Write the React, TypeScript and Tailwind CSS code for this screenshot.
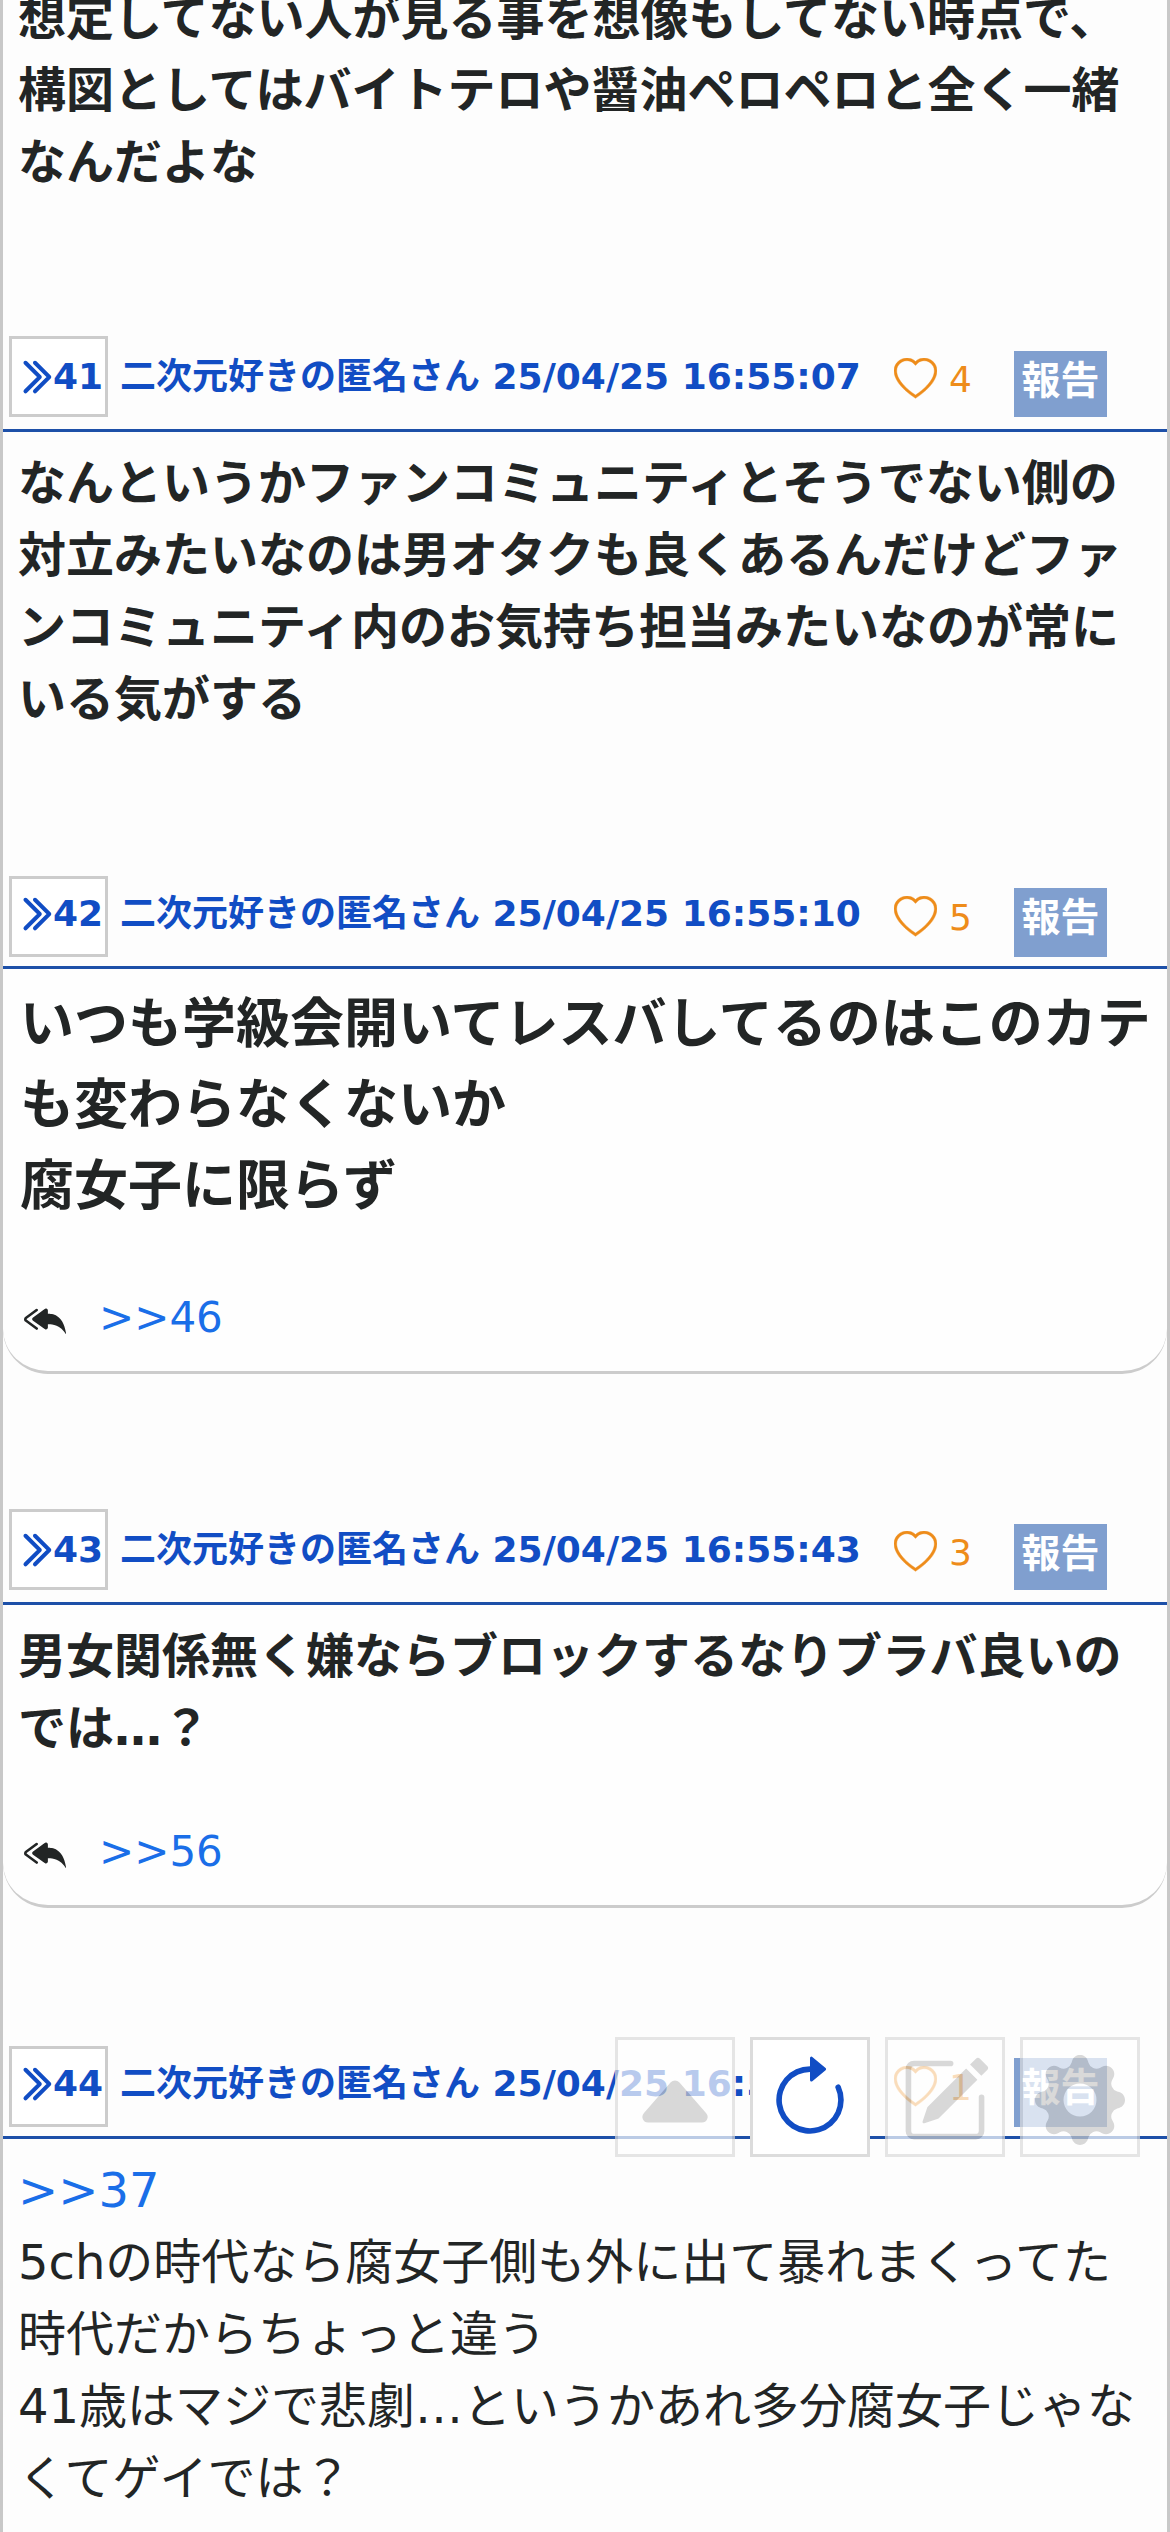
import type { ReactNode } from "react";
import {
  BsArrowClockwise,
  BsCaretUpFill,
  BsChevronDoubleRight,
  BsGearFill,
  BsHeart,
  BsPencilSquare,
  BsReplyAllFill,
} from "react-icons/bs";

type HeaderProps = { no: number; time: string; likes: number; tall?: boolean };

function PostHeader({ no, time, likes, tall = false }: HeaderProps) {
  return (
    <header
      className={`flex items-start border-b-3 border-[#1d50a8] pr-[60px] pl-1.5 text-4xl leading-[54px] font-bold whitespace-nowrap text-[#114dc4] ${
        tall ? "h-24" : "h-[93px]"
      }`}
    >
      <a className={`flex h-[81px] w-[99px] shrink-0 items-start border-3 border-[#ccc] bg-white pl-1 ${tall ? "pt-[11px]" : "pt-2"}`}>
        <BsChevronDoubleRight className="mt-[8px] h-[38px] w-[38px] shrink-0 stroke-[0.7]" />
        <span className="-ml-[1px]">{no}</span>
      </a>
      <span className={tall ? "ml-[12px] pt-3.5" : "ml-[12px] pt-[11px]"}>二次元好きの匿名さん 25/04/25 {time}</span>
      <div className="ml-auto flex w-[213px] shrink-0 items-start justify-between">
        <span className={`flex font-normal text-[#ee8c1a] ${tall ? "pt-[17px]" : "pt-[15px]"}`}>
          <BsHeart className="mt-[5px] mr-[12px] h-[43px] w-[43px] shrink-0 stroke-[0.15]" />
          {likes}
        </span>
        <button
          className={`flex w-[93px] shrink-0 items-start justify-center bg-[#809fcf] text-[39px] leading-[59px] font-bold text-white ${
            tall ? "mt-[15px] h-[66px]" : "mt-3 h-[69px]"
          }`}
        >
          報告
        </button>
      </div>
    </header>
  );
}

function Quote({ children }: { children: ReactNode }) {
  return (
    <div className="flex h-[60px] items-center pl-[21px]">
      <BsReplyAllFill className="mt-1 h-[42px] w-[42px]" />
      <a className="ml-[33px] text-[42px] text-[#1a6ee8]">{children}</a>
    </div>
  );
}

export default function App() {
  return (
    <main
      lang="ja"
      className="relative h-[2532px] w-[1170px] overflow-hidden border-x-3 border-[#c8c8c8] bg-[#fdfdfd] font-['DejaVu_Sans','Noto_Sans_CJK_JP',sans-serif] text-[#222525]"
    >
      <div className="flow-root h-[336px]">
        <p className="-mt-[18px] pl-[15px] text-5xl leading-[72px] font-bold whitespace-nowrap">
          想定してない人が見る事を想像もしてない時点で、
          <br />
          構図としてはバイトテロや醤油ペロペロと全く一緒
          <br />
          なんだよな
        </p>
      </div>

      <article className="h-[540px]">
        <PostHeader no={41} time="16:55:07" likes={4} tall />
        <p className="pt-[15px] pl-[15px] text-5xl leading-[72px] font-bold whitespace-nowrap">
          なんというかファンコミュニティとそうでない側の
          <br />
          対立みたいなのは男オタクも良くあるんだけどファ
          <br />
          ンコミュニティ内のお気持ち担当みたいなのが常に
          <br />
          いる気がする
        </p>
      </article>

      <article className="h-[633px]">
        <PostHeader no={42} time="16:55:10" likes={5} />
        <div className="h-[405px] rounded-b-[45px] border-b-3 border-[#ccc] bg-[#fefefe]">
          <p className="h-[318px] pt-[15px] pl-[17px] text-[54px] leading-[81px] font-bold whitespace-nowrap">
            いつも学級会開いてレスバしてるのはこのカテ
            <br />
            も変わらなくないか
            <br />
            腐女子に限らず
          </p>
          <Quote>&gt;&gt;46</Quote>
        </div>
      </article>

      <article className="h-[537px]">
        <PostHeader no={43} time="16:55:43" likes={3} tall />
        <div className="h-[303px] rounded-b-[45px] border-b-3 border-[#ccc] bg-[#fefefe]">
          <p className="h-[216px] pt-[15px] pl-[15px] text-5xl leading-[72px] font-bold whitespace-nowrap">
            男女関係無く嫌ならブロックするなりブラバ良いの
            <br />
            では…？
          </p>
          <Quote>&gt;&gt;56</Quote>
        </div>
      </article>

      <article>
        <PostHeader no={44} time="16:58:21" likes={1} />
        <p className="pt-[15px] pl-[15px] text-5xl leading-[72px] whitespace-nowrap">
          <a className="text-[#1a6ee8]">&gt;&gt;37</a>
          <br />
          5chの時代なら腐女子側も外に出て暴れまくってた
          <br />
          時代だからちょっと違う
          <br />
          41歳はマジで悲劇…というかあれ多分腐女子じゃな
          <br />
          くてゲイでは？
        </p>
      </article>

      <nav className="absolute top-[2037px] left-[612px] flex gap-[15px] text-[#c9c9c9]">
        <button className="flex h-30 w-30 items-center justify-center border-3 border-[#dcdcdc] bg-white pt-1.5 opacity-70">
          <BsCaretUpFill className="h-[90px] w-[90px]" />
        </button>
        <button className="flex h-30 w-30 items-center justify-center border-3 border-[#dcdcdc] bg-white pt-1.5 text-[#114dc4]">
          <BsArrowClockwise className="h-[90px] w-[90px]" />
        </button>
        <button className="flex h-30 w-30 items-center justify-center border-3 border-[#dcdcdc] bg-white pt-1.5 opacity-70">
          <BsPencilSquare className="h-[90px] w-[90px]" />
        </button>
        <button className="flex h-30 w-30 items-center justify-center border-3 border-[#dcdcdc] bg-white pt-1.5 opacity-70">
          <BsGearFill className="h-[90px] w-[90px]" />
        </button>
      </nav>
    </main>
  );
}
